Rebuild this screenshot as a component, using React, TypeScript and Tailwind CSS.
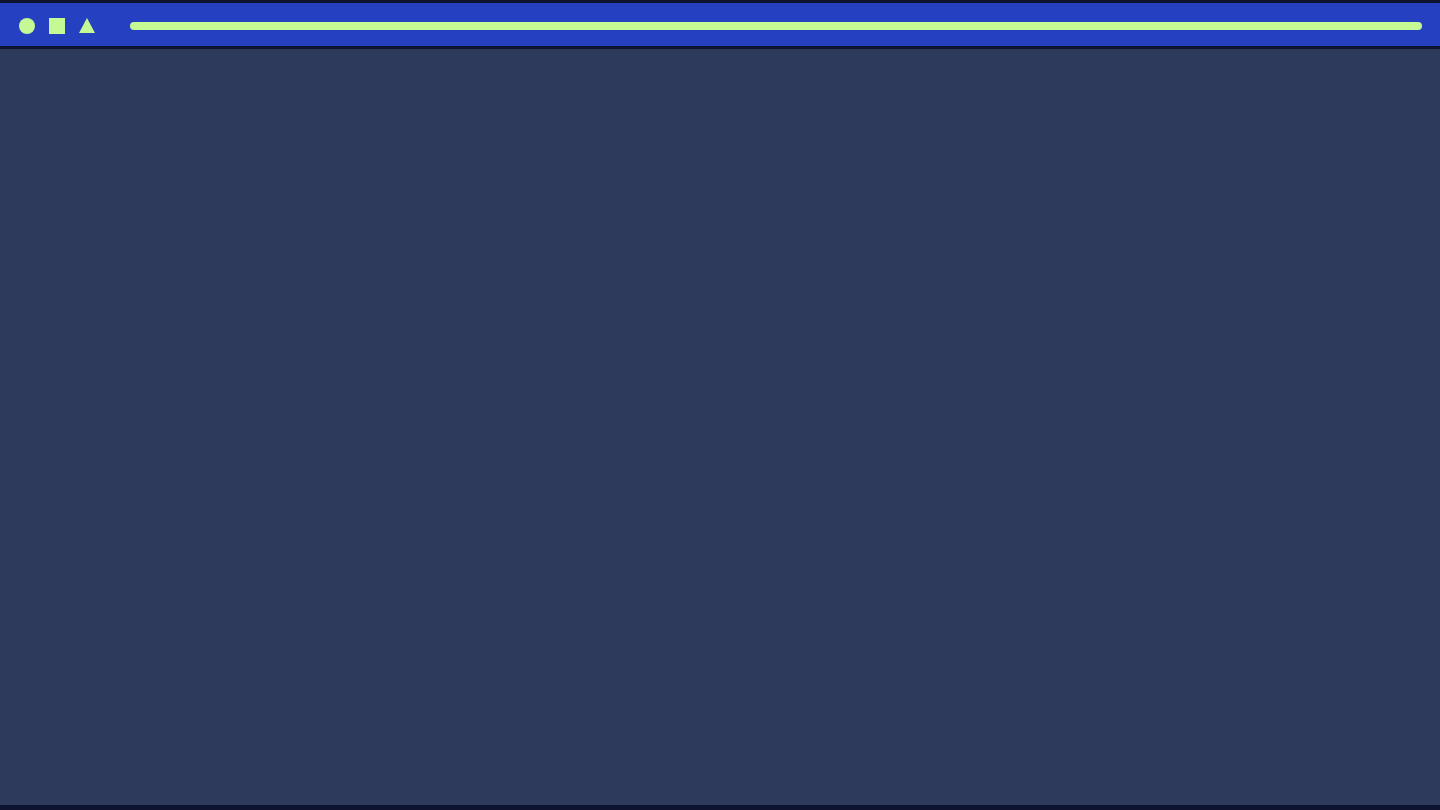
export default function App() {
  return (
    <div className="flex h-[810px] w-full flex-col bg-[#0e1430]">
      {/* Top bar */}
      <div className="mt-[3px] flex h-[43px] items-center bg-[#2541c2] pl-[19px] pr-[18px] pt-[2px]">
        <div className="flex items-center gap-[14px]">
          <div className="h-4 w-4 rounded-full bg-[#c4f993]" />
          <div className="h-4 w-4 bg-[#c4f993]" />
          <svg width="16" height="15" viewBox="0 0 16 15">
            <polygon points="8,0 16,15 0,15" fill="#c4f993" />
          </svg>
        </div>
        <div className="ml-[35px] h-2 flex-1 rounded-full bg-[#c4f993]" />
      </div>

      {/* Body */}
      <div className="mt-[3px] mb-[5px] flex-1 bg-[#2e3a5b]" />
    </div>
  );
}
